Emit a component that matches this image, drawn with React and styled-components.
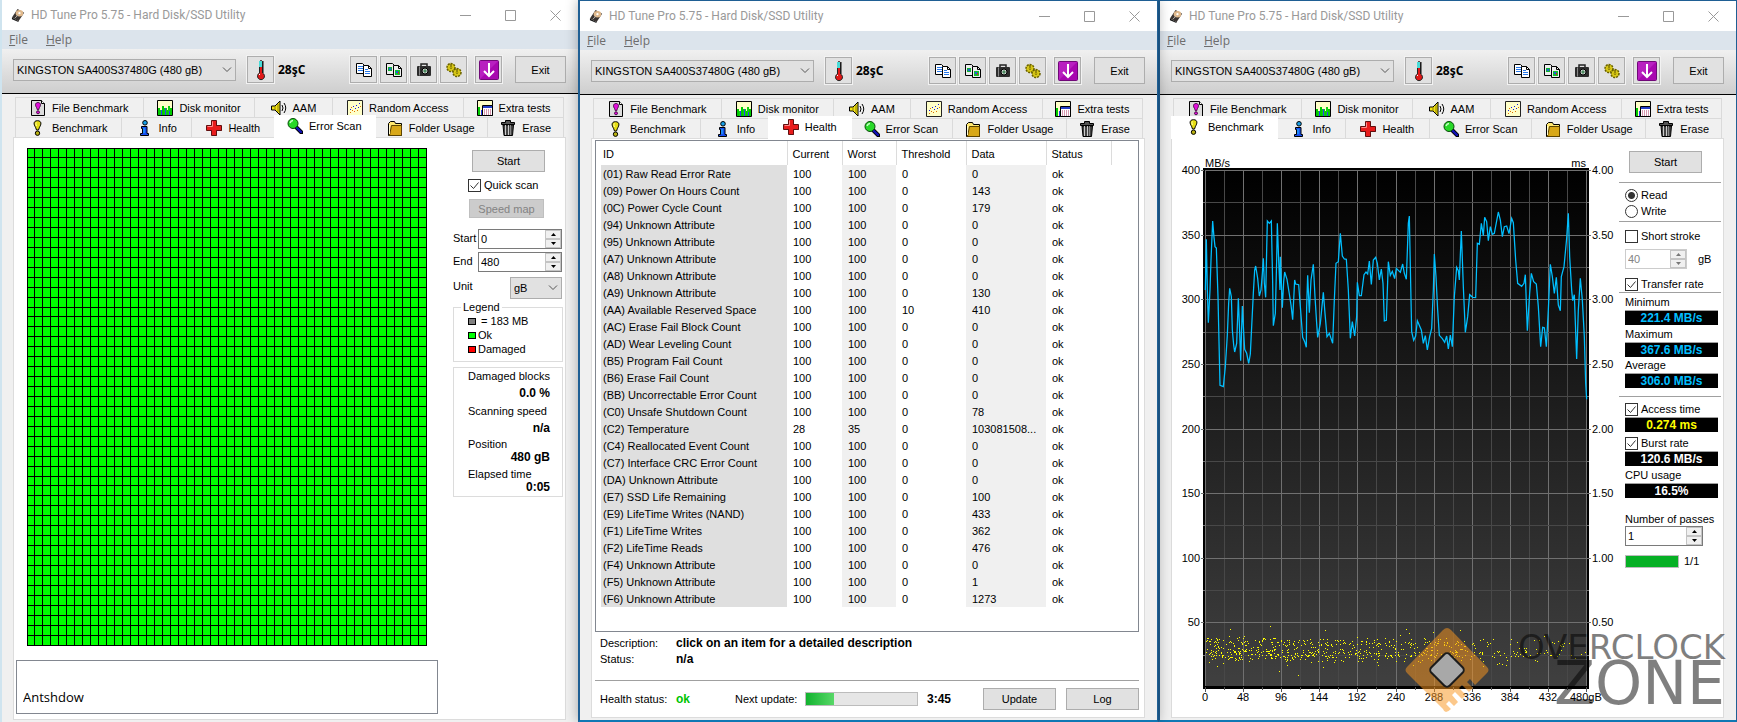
import React from "react";
import styled, { createGlobalStyle, css } from "styled-components";

const GlobalStyle = createGlobalStyle`
  * {
    box-sizing: border-box;
  }

  body {
    margin: 0;
    background: #cfe4ef;
    color: #000;
    font-family: "Liberation Sans", Arial, sans-serif;
    font-size: 11px;
    line-height: 14px;
  }

  button, input, select {
    font: inherit;
    color: inherit;
    border-radius: 0;
    margin: 0;
    padding: 0;
  }

  svg {
    display: block;
    flex: none;
  }
`;

/* ---------- window frame ---------- */

const Desktop = styled.main`
  display: flex;
  min-height: 100vh;
  padding-left: 2px;
`;

const Frame = styled.section`
  display: flex;
  flex-direction: column;
  flex: ${(props) => props.$grow} 1 0;
  min-width: 0;
  background: #f0f0f0;
  ${(props) =>
    props.$framed &&
    css`
      border: solid #1f5f94;
      border-width: 1px 1px 2px 2px;
      border-bottom-color: #0f78b4;
    `}
  ${(props) =>
    props.$raised &&
    css`
      z-index: 1;
      box-shadow: 0 0 12px rgba(0, 0, 0, 0.3);
    `}
`;

const TitleBar = styled.header`
  display: flex;
  align-items: center;
  height: 30px;
  padding: 0 16px 0 9px;
  background: #fff;
`;

const Title = styled.h1`
  flex: 1;
  margin: 0 0 0 5px;
  color: #999;
  font: 12px/18px Roboto, "Noto Sans", sans-serif;
  white-space: nowrap;
`;

const WindowButton = styled.button`
  display: grid;
  place-items: center;
  width: 13px;
  height: 18px;
  margin-left: 32px;
  border: 0;
  background: none;
`;

const MenuBar = styled.nav`
  display: flex;
  gap: 18px;
  height: 19px;
  padding-left: 7px;
  background: #dce4ec;

  a {
    color: #6d6d6d;
    font: 12px/19px "Open Sans", "Noto Sans", sans-serif;
    text-decoration: none;
  }
`;

const Toolbar = styled.div`
  display: flex;
  align-items: center;
  height: 45px;
  padding: 7px 12px 10px 11px;
  border-bottom: 1px solid #000;
  background: linear-gradient(#f0f0f0, #cecece);
`;

const Button = styled.button`
  width: ${(props) => props.$width || 73}px;
  height: ${(props) => props.$height || 22}px;
  margin-left: ${(props) => props.$left || 0}px;
  border: 1px solid #adadad;
  background: #e1e1e1;
  white-space: nowrap;

  &:disabled {
    border-color: #bfbfbf;
    background: #ccc;
    color: #838383;
  }
`;

const IconButton = styled(Button)`
  display: grid;
  place-items: center;
  box-shadow: 0 0 0 1px #f2f2f2;
`;

const Degrees = styled.strong`
  flex: 1;
  margin-left: 4px;
  font: bold 12px/16px "Open Sans", "Noto Sans", sans-serif;
`;

const SelectBox = styled.div`
  position: relative;
  width: ${(props) => props.$width}px;
  height: 22px;

  select {
    width: 100%;
    height: 100%;
    padding: 0 3px;
    border: 1px solid #adadad;
    background: #e1e1e1;
    appearance: none;
  }

  svg {
    position: absolute;
    top: 8px;
    right: 4px;
    pointer-events: none;
  }
`;

/* ---------- tabs ---------- */

const Body = styled.div`
  display: flex;
  flex-direction: column;
  flex: 1;
  padding: 3px 12px 2px 11px;
`;

const TabRow = styled.div`
  display: flex;
  height: 20px;
  margin: 0 2px;
`;

const Tab = styled.button`
  display: flex;
  align-items: center;
  justify-content: center;
  gap: 6px;
  flex: ${(props) => props.$grow} 1 0;
  min-width: 0;
  border: solid #dadada;
  border-width: 1px 1px 0 0;
  background: #f0f0f0;
  white-space: nowrap;

  &:first-child {
    border-left-width: 1px;
  }

  ${(props) =>
    props.$active &&
    css`
      z-index: 1;
      margin: -2px -2px -1px;
      padding-bottom: 3px;
      border-color: #fff;
      background: #fff;
    `}
`;

const Panel = styled.div`
  position: relative;
  display: flex;
  flex: 1;
  border: 1px solid #dcdcdc;
  background: #fff;
`;

/* ---------- shared controls ---------- */

const Rule = styled.hr`
  width: 100%;
  height: 1px;
  margin: ${(props) => props.$top}px 0 0;
  border: 0;
  background: #a0a0a0;
`;

const Check = styled.label`
  display: flex;
  align-items: center;
  gap: 3px;
  height: ${(props) => props.$height || 14}px;
  margin-top: ${(props) => props.$top || 0}px;
  margin-left: ${(props) => props.$left || 0}px;
  white-space: nowrap;

  input {
    width: 13px;
    height: 13px;
    border: 1px solid #333;
    background: #fff center / 11px no-repeat;
    appearance: none;
  }

  input[type="checkbox"]:checked {
    background-image: url("data:image/svg+xml,%3Csvg xmlns='http://www.w3.org/2000/svg' viewBox='0 0 11 11'%3E%3Cpath d='M1.5 5.5l3 3 5-6' fill='none' stroke='%23333'/%3E%3C/svg%3E");
  }

  input[type="radio"] {
    border-radius: 50%;
  }

  input[type="radio"]:checked {
    background: radial-gradient(#333 0 3px, #fff 4px);
  }
`;

const SpinBox = styled.div`
  display: flex;
  width: ${(props) => props.$width}px;
  height: 20px;
  border: 1px solid ${(props) => (props.$disabled ? "#ccc" : "#7a7a7a")};
  background: #fff;

  input {
    flex: 1;
    min-width: 0;
    padding-left: 2px;
    border: 0;
    background: none;
  }

  input:disabled {
    color: #838383;
  }
`;

const Arrows = styled.div`
  display: grid;
  grid-template-rows: 1fr 1fr;
  width: 16px;

  button {
    display: grid;
    place-items: center;
    border: 1px solid #c4c4c4;
    background: #f0f0f0;
  }
`;

const Chevron = () => (
  <svg width="10" height="6" viewBox="0 0 10 6">
    <path d="M1 .5l4 4 4-4" fill="none" stroke="#555" />
  </svg>
);

const Spinner = ({ id, value, width, disabled }) => (
  <SpinBox $width={width} $disabled={disabled}>
    <input id={id} defaultValue={value} disabled={disabled} aria-label={id} />
    <Arrows>
      <button aria-label="Increase" disabled={disabled}>
        <svg width="5" height="3" viewBox="0 0 5 3">
          <path d="M0 3L2.500 0 5 3z" fill={disabled ? "#777" : "#000"} />
        </svg>
      </button>
      <button aria-label="Decrease" disabled={disabled}>
        <svg width="5" height="3" viewBox="0 0 5 3">
          <path d="M0 0l2.500 3L5 0z" fill={disabled ? "#777" : "#000"} />
        </svg>
      </button>
    </Arrows>
  </SpinBox>
);

/* ---------- icons ---------- */

const icons = {
  drive: (
    <>
      <path d="M7 1l7 4-6 9-7-4z" fill="#3a3431" />
      <path d="M1 10l7 4v1l-7-3z" fill="#111" />
      <ellipse cx="9" cy="5.500" rx="4" ry="3.500" fill="#e0b98c" />
      <circle cx="9" cy="5.500" r="1.200" fill="#fff" />
      <path d="M4 11l4-4" stroke="#b9b3ae" />
    </>
  ),
  fileBenchmark: (
    <>
      <path d="M1.500 .5h10l3 3v12h-13z" fill="#dcdcdc" stroke="#000" />
      <path d="M11.500 .5v3h3" fill="#fff" stroke="#000" />
      <path d="M8 2.500c3 0 3 3 1.500 5L8.500 10h-1L6.500 7.500C5 5.500 5 2.500 8 2.500z" fill="#e010d8" stroke="#300030" strokeWidth=".8" />
      <circle cx="8" cy="12.300" r="1.500" fill="#e010d8" stroke="#300030" strokeWidth=".8" />
    </>
  ),
  monitor: (
    <>
      <path d="M.5 .5h15v15H.5z" fill="#ffffc8" stroke="#000" />
      <path d="M1 8h2v7H1zM5 6h2v9H5zM10 10h1v5h-1zM13 8h2v7h-2z" fill="#0c0" />
      <path d="M3 10h2v5H3zM7 8h3v7H7zM11 6h2v9h-2z" fill="#12d012" />
      <path d="M4 10h1v5H4zM8 8h1v7H8zM12 11h1v4h-1z" fill="#2c3cf0" />
    </>
  ),
  speaker: (
    <>
      <path d="M.5 6h3.500l5-5v14l-5-5H.5z" fill="#f0e418" stroke="#000" />
      <path d="M4 6v4M7 4v8" stroke="#907c00" />
      <path d="M11 5q2 3 0 6M13 3q3.500 5 0 10" fill="none" stroke="#000" />
    </>
  ),
  random: (
    <>
      <path d="M.5 .5h15v15H.5z" fill="#ffffc8" stroke="#222" />
      <path d="M3 9h1v1H3zM6 6h1v1H6zM9 5h1v1H9zM8 8h1v1H8zM11 7h1v1h-1zM12 3h1v1h-1z" fill="#1818e0" />
      <path d="M3 12h1v1H3zM5 10h1v1H5zM7 11h1v1H7zM10 10h1v1h-1zM13 6h1v1h-1zM4 7h1v1H4z" fill="#e07000" />
    </>
  ),
  extra: (
    <>
      <path d="M.5 .5h15v15H.5z" fill="#ffffc8" stroke="#000" />
      <path d="M1 7h2v8H1z" fill="#0c0" />
      <path d="M4 10h1v5H4z" fill="#2c3cf0" />
      <path d="M5.500 5.500h10v10h-10z" fill="#fff" stroke="#000" />
      <path d="M6 6h9v2H6z" fill="#2440c8" />
      <path d="M7 10h8M7 12h8M7 14h8" stroke="#b03060" strokeDasharray="1 1" />
    </>
  ),
  benchmark: (
    <>
      <path d="M7.500 .7c4.500 0 3.800 4 2 6.500L8.500 10h-2l-1-2.800C3.700 4.700 3 .7 7.500.7z" fill="#e6de14" stroke="#000" />
      <path d="M6.500 2.500q-1.500 1 0 3.500" fill="none" stroke="#fffcb0" />
      <circle cx="7.500" cy="13.200" r="2.200" fill="#b8b010" stroke="#000" />
    </>
  ),
  info: (
    <>
      <circle cx="8" cy="2.800" r="2.300" fill="#18a0e8" stroke="#000" />
      <path d="M4.500 6.500h5.500v7h1.500v2h-8v-2h2v-5h-1z" fill="#1850f0" stroke="#000" />
      <path d="M7 8v5" stroke="#20c0ff" />
    </>
  ),
  health: (
    <>
      <path d="M6 1.500h5v4.500h4.500v5H11v4.500H6V11H1V6h5z" fill="#400" />
      <path d="M5.500 .5h5v5h5v5h-5v5h-5v-5h-5v-5h5z" fill="#e81c1c" stroke="#601010" />
      <path d="M6.500 1.500v5h-5" fill="none" stroke="#ff8c8c" />
    </>
  ),
  scan: (
    <>
      <path d="M9 9l5.500 5.500" stroke="#000" strokeWidth="4" strokeLinecap="round" />
      <path d="M9.500 9.500l4.500 4.500" stroke="#1010b8" strokeWidth="2.400" strokeLinecap="round" />
      <circle cx="6" cy="5.500" r="5" fill="#28d828" stroke="#064806" />
      <path d="M3 5q1-2.500 3-2.500" fill="none" stroke="#c8ffc8" strokeWidth="1.500" />
    </>
  ),
  folder: (
    <>
      <path d="M1.500 3.500l2-2h4l1 2h6v12h-13z" fill="#ffe870" stroke="#000" />
      <path d="M4.500 5.500h10v10h-12z" fill="#d8a818" stroke="#5c4400" />
      <path d="M2.500 5v9" stroke="#fffad0" />
    </>
  ),
  trash: (
    <>
      <path d="M5.500 .5h5v2h4v2h-13v-2h4z" fill="#555" stroke="#000" />
      <path d="M3 5h10.500l-1 10.500H4z" fill="#444" stroke="#000" />
      <path d="M5.500 5v10M8.500 5v10" stroke="#ccc" />
      <path d="M10.500 5v10" stroke="#888" />
    </>
  ),
  copy: (
    <>
      <path d="M.5 1.500h6l2 2v8h-8z" fill="#fff" stroke="#000" />
      <path d="M2 4.500h5M2 6.500h5M2 8.500h5" stroke="#2878e8" />
      <path d="M7.500 3.500h5l3 3v8h-8z" fill="#fff" stroke="#000" />
      <path d="M12.500 3.500v3h3" fill="none" stroke="#000" />
      <path d="M9 7.500h3M9 9.500h5M9 11.500h5" stroke="#2878e8" />
    </>
  ),
  copyImage: (
    <>
      <path d="M.5 1.500h6l2 2v9h-8z" fill="#eee" stroke="#000" />
      <path d="M2 5h4v4H2z" fill="#10b030" />
      <path d="M7.500 3.500h5l3 3v8h-8z" fill="#eee" stroke="#000" />
      <path d="M12.500 3.500v3h3" fill="none" stroke="#000" />
      <path d="M9 8h5v5H9z" fill="#10c030" />
      <path d="M3 6h2v2H3zM10 9h2v2h-2z" fill="#2060d8" />
      <path d="M12 10h1v2h-1z" fill="#e02020" />
    </>
  ),
  camera: (
    <>
      <path d="M5 4V2h6v2" fill="none" stroke="#222" strokeWidth="1.500" />
      <rect x="1" y="4" width="14" height="10" rx="1" fill="#2c2c2c" />
      <path d="M3.500 4.500v9" stroke="#888" />
      <circle cx="9" cy="9" r="3" fill="#ddd" stroke="#000" />
      <circle cx="9" cy="9" r="1.700" fill="#4c8c60" />
    </>
  ),
  gears: (
    <>
      <circle cx="5" cy="5.500" r="4" fill="#d8c818" stroke="#686000" strokeWidth="1.500" strokeDasharray="2 1" />
      <circle cx="11" cy="10.500" r="4" fill="#d8c818" stroke="#686000" strokeWidth="1.500" strokeDasharray="2 1" />
      <path d="M5 2v5M11 7v5" stroke="#504800" />
      <path d="M3.500 5.500h3M9.500 10.500h3" stroke="#b8a800" />
    </>
  ),
};

const Icon = ({ name, size = 16 }) => (
  <svg width={size} height={size} viewBox="0 0 16 16">
    {icons[name]}
  </svg>
);

const Thermometer = () => (
  <svg width="12" height="22" viewBox="0 0 12 22">
    <path d="M4.500 2.500q1.500-2 3 0V14a3.500 3.500 0 1 1-3 0z" fill="#e01818" stroke="#222" />
    <path d="M4 2h3v6H4z" fill="#48dcd8" />
    <path d="M8 2v12" stroke="#111" />
    <path d="M4 16l1-1" stroke="#fff" />
  </svg>
);

const SaveArrow = () => (
  <svg width="20" height="20" viewBox="0 0 20 20">
    <rect x=".5" y=".5" width="19" height="19" rx="1" fill="#a808b0" stroke="#700878" />
    <path d="M1 1h18L1 19z" fill="#c838d0" opacity=".5" />
    <path d="M10 3v12M5 11l5 5 5-5" fill="none" stroke="#fff" strokeWidth="2" />
  </svg>
);

/* ---------- window ---------- */

const topTabs = [
  { name: "File Benchmark", icon: "fileBenchmark", grow: 128 },
  { name: "Disk monitor", icon: "monitor", grow: 112 },
  { name: "AAM", icon: "speaker", grow: 77 },
  { name: "Random Access", icon: "random", grow: 132 },
  { name: "Extra tests", icon: "extra", grow: 100 },
];

const bottomTabs = [
  { name: "Benchmark", icon: "benchmark", grow: 106 },
  { name: "Info", icon: "info", grow: 69 },
  { name: "Health", icon: "health", grow: 83 },
  { name: "Error Scan", icon: "scan", grow: 102 },
  { name: "Folder Usage", icon: "folder", grow: 114 },
  { name: "Erase", icon: "trash", grow: 75 },
];

const tools = ["copy", "copyImage", "camera", "gears"];

const Window = ({ active, grow, framed, raised, children }) => (
  <Frame $grow={grow} $framed={framed} $raised={raised}>
    <TitleBar>
      <Icon name="drive" size={15} />
      <Title>HD Tune Pro 5.75 - Hard Disk/SSD Utility</Title>
      <WindowButton aria-label="Minimize">
        <svg width="11" height="11" viewBox="0 0 11 11">
          <path d="M0 5.500h11" stroke="#999" />
        </svg>
      </WindowButton>
      <WindowButton aria-label="Maximize">
        <svg width="11" height="11" viewBox="0 0 11 11">
          <path d="M.5 .5h10v10H.5z" fill="none" stroke="#999" />
        </svg>
      </WindowButton>
      <WindowButton aria-label="Close">
        <svg width="11" height="11" viewBox="0 0 11 11">
          <path d="M.5 .5l10 10M10.500 .5l-10 10" stroke="#999" />
        </svg>
      </WindowButton>
    </TitleBar>
    <MenuBar>
      <a href="#file">
        <u>F</u>ile
      </a>
      <a href="#help">
        <u>H</u>elp
      </a>
    </MenuBar>
    <Toolbar>
      <SelectBox $width={223}>
        <select aria-label="Drive">
          <option>KINGSTON SA400S37480G (480 gB)</option>
        </select>
        <Chevron />
      </SelectBox>
      <IconButton $width={27} $height={27} $left={11} aria-label="Temperature">
        <Thermometer />
      </IconButton>
      <Degrees>28şC</Degrees>
      {tools.map((tool) => (
        <IconButton $width={27} $height={27} $left={3} key={tool} aria-label={tool}>
          <Icon name={tool} />
        </IconButton>
      ))}
      <IconButton $width={27} $height={27} $left={8} aria-label="Save">
        <SaveArrow />
      </IconButton>
      <Button $width={51} $height={27} $left={13}>
        Exit
      </Button>
    </Toolbar>
    <Body>
      {[topTabs, bottomTabs].map((row, index) => (
        <TabRow key={index}>
          {row.map((tab) => (
            <Tab key={tab.name} $grow={tab.grow} $active={tab.name === active}>
              <Icon name={tab.icon} />
              {tab.name}
            </Tab>
          ))}
        </TabRow>
      ))}
      <Panel>{children}</Panel>
    </Body>
  </Frame>
);

/* ---------- error scan ---------- */

const ScanLayout = styled.div`
  display: flex;
  justify-content: space-between;
  flex: 1;
  padding: 10px 2px 5px;
`;

const ScanMain = styled.div`
  display: flex;
  flex-direction: column;
  gap: 14px;
  width: 422px;

  svg {
    margin-left: 11px;
  }
`;

const Note = styled.input`
  height: 54px;
  padding: 20px 6px 0;
  border: 1px solid #828790;
  font: 13px/18px "Open Sans", "Noto Sans", sans-serif;
`;

const ScanSide = styled.div`
  display: flex;
  flex-direction: column;
  width: 110px;
  padding-top: 2px;
`;

const Field = styled.div`
  display: flex;
  justify-content: space-between;
  align-items: flex-start;
  margin-top: ${(props) => props.$top}px;
  padding-right: 1px;

  label {
    padding-top: 2px;
  }
`;

const SpeedMap = styled(Button)`
  margin-top: 7px;
`;

const Legend = styled.fieldset`
  height: 62px;
  margin: 1px 0 0;
  padding: 0 0 0 14px;
  border: 1px solid #dcdcdc;

  legend {
    margin-left: -7px;
    padding: 0 2px;
  }
`;

const LegendItem = styled.div`
  display: flex;
  align-items: center;
  gap: 2px;

  i {
    width: 8px;
    height: 7px;
    border: 1px solid #000;
    background: ${(props) => props.$color};
  }
`;

const Stats = styled.dl`
  height: 130px;
  margin: 5px 0 0;
  padding: 0 12px 0 14px;
  border: 1px solid #dcdcdc;
  white-space: nowrap;
`;

const Stat = styled.div`
  margin-bottom: ${(props) => (props.$tight ? 4 : 1)}px;
  line-height: ${(props) => (props.$tight ? 13 : 17)}px;

  dd {
    margin: 0;
    font-size: 12px;
    font-weight: bold;
    text-align: right;
  }
`;

const steps = Array.from({ length: 51 }, (_, i) => i);

const BlockMap = () => (
  <svg width="400" height="498" viewBox="0 0 400 498">
    <path d="M0 0h400v498H0z" fill="#0f0" />
    <g stroke="#000">
      {steps.map((i) => (
        <path key={`c${i}`} d={`M${Math.floor(i * 7.98) + 0.5} 0v498`} />
      ))}
      {steps.map((i) => (
        <path key={`r${i}`} d={`M0 ${Math.floor(i * 9.94) + 0.5}h400`} />
      ))}
    </g>
  </svg>
);

const ErrorScan = () => (
  <ScanLayout>
    <ScanMain>
      <BlockMap />
      <Note defaultValue="Antshdow" aria-label="Note" />
    </ScanMain>
    <ScanSide>
      <Button $left={19}>Start</Button>
      <Check $top={6} $left={15}>
        <input type="checkbox" defaultChecked />
        Quick scan
      </Check>
      <SpeedMap disabled $width={75} $height={19} $left={16}>
        Speed map
      </SpeedMap>
      <Field $top={11}>
        <label htmlFor="scan-start">Start</label>
        <Spinner id="scan-start" value="0" width={84} />
      </Field>
      <Field $top={3}>
        <label htmlFor="scan-end">End</label>
        <Spinner id="scan-end" value="480" width={84} />
      </Field>
      <Field $top={5}>
        <label htmlFor="scan-unit">Unit</label>
        <SelectBox $width={52}>
          <select id="scan-unit">
            <option>gB</option>
          </select>
          <Chevron />
        </SelectBox>
      </Field>
      <Legend>
        <legend>Legend</legend>
        <LegendItem $color="#808080">
          <i />
          {"\u00a0= 183 MB"}
        </LegendItem>
        <LegendItem $color="#0f0">
          <i />
          Ok
        </LegendItem>
        <LegendItem $color="#f00">
          <i />
          Damaged
        </LegendItem>
      </Legend>
      <Stats>
        <Stat>
          <dt>Damaged blocks</dt>
          <dd>0.0 %</dd>
        </Stat>
        <Stat>
          <dt>Scanning speed</dt>
          <dd>n/a</dd>
        </Stat>
        <Stat $tight>
          <dt>Position</dt>
          <dd>480 gB</dd>
        </Stat>
        <Stat $tight>
          <dt>Elapsed time</dt>
          <dd>0:05</dd>
        </Stat>
      </Stats>
    </ScanSide>
  </ScanLayout>
);

/* ---------- health ---------- */

const attributes = [
  ["(01) Raw Read Error Rate", 100, 100, 0, "0"],
  ["(09) Power On Hours Count", 100, 100, 0, "143"],
  ["(0C) Power Cycle Count", 100, 100, 0, "179"],
  ["(94) Unknown Attribute", 100, 100, 0, "0"],
  ["(95) Unknown Attribute", 100, 100, 0, "0"],
  ["(A7) Unknown Attribute", 100, 100, 0, "0"],
  ["(A8) Unknown Attribute", 100, 100, 0, "0"],
  ["(A9) Unknown Attribute", 100, 100, 0, "130"],
  ["(AA) Available Reserved Space", 100, 100, 10, "410"],
  ["(AC) Erase Fail Block Count", 100, 100, 0, "0"],
  ["(AD) Wear Leveling Count", 100, 100, 0, "0"],
  ["(B5) Program Fail Count", 100, 100, 0, "0"],
  ["(B6) Erase Fail Count", 100, 100, 0, "0"],
  ["(BB) Uncorrectable Error Count", 100, 100, 0, "0"],
  ["(C0) Unsafe Shutdown Count", 100, 100, 0, "78"],
  ["(C2) Temperature", 28, 35, 0, "103081508..."],
  ["(C4) Reallocated Event Count", 100, 100, 0, "0"],
  ["(C7) Interface CRC Error Count", 100, 100, 0, "0"],
  ["(DA) Unknown Attribute", 100, 100, 0, "0"],
  ["(E7) SSD Life Remaining", 100, 100, 0, "100"],
  ["(E9) LifeTime Writes (NAND)", 100, 100, 0, "433"],
  ["(F1) LifeTime Writes", 100, 100, 0, "362"],
  ["(F2) LifeTime Reads", 100, 100, 0, "476"],
  ["(F4) Unknown Attribute", 100, 100, 0, "0"],
  ["(F5) Unknown Attribute", 100, 100, 0, "1"],
  ["(F6) Unknown Attribute", 100, 100, 0, "1273"],
];

const columns = [
  { name: "ID", width: 186 },
  { name: "Current", width: 55 },
  { name: "Worst", width: 54 },
  { name: "Threshold", width: 70 },
  { name: "Data", width: 80 },
  { name: "Status", width: 65 },
];

const HealthLayout = styled.div`
  display: flex;
  flex-direction: column;
  flex: 1;
  padding: 1px 5px 7px 3px;
`;

const ListView = styled.div`
  flex: 1;
  padding-left: 5px;
  border: 1px solid #828790;
`;

const AttributeTable = styled.table`
  width: 510px;
  border-collapse: collapse;
  table-layout: fixed;
  white-space: nowrap;

  th {
    height: 24px;
    padding: 2px 0 0 5px;
    border-right: 1px solid #dcdcdc;
    font-weight: normal;
    text-align: left;
  }

  td {
    height: 17px;
    padding: 0 0 0 6px;
  }

  th:first-child,
  td:first-child {
    padding-left: 2px;
  }

  td:first-child {
    background: #dfdfdf;
  }

  td:nth-child(3),
  td:nth-child(5) {
    background: #f0f0f0;
  }
`;

const Details = styled.dl`
  display: grid;
  grid-template-columns: 76px 1fr;
  margin: 3px 0 0 5px;
  line-height: 16px;

  dd {
    margin: 0;
    font-size: 12px;
    font-weight: bold;
  }
`;

const HealthFooter = styled.div`
  display: flex;
  align-items: center;
  margin-top: 7px;
  padding-left: 5px;
`;

const Caption = styled.span`
  width: ${(props) => props.$width}px;
  white-space: nowrap;
`;

const HealthOk = styled.strong`
  width: 59px;
  color: #00c400;
  font-size: 12px;
`;

const Countdown = styled.strong`
  flex: 1;
  margin-left: 9px;
  font-size: 12px;
`;

const Meter = styled.div`
  width: ${(props) => props.$width}px;
  height: ${(props) => props.$height}px;
  border: 1px solid #bcbcbc;
  background: #e6e6e6;

  div {
    height: 100%;
    background: ${(props) =>
      props.$plain ? "#06b025" : "linear-gradient(90deg, #12b32f, #58d868)"};
  }
`;

const Health = () => (
  <HealthLayout>
    <ListView>
      <AttributeTable>
        <colgroup>
          {columns.map((column) => (
            <col key={column.name} style={{ width: column.width }} />
          ))}
        </colgroup>
        <thead>
          <tr>
            {columns.map((column) => (
              <th key={column.name}>{column.name}</th>
            ))}
          </tr>
        </thead>
        <tbody>
          {attributes.map((row) => (
            <tr key={row[0]}>
              {row.map((value, index) => (
                <td key={index}>{value}</td>
              ))}
              <td>ok</td>
            </tr>
          ))}
        </tbody>
      </AttributeTable>
    </ListView>
    <Details>
      <dt>Description:</dt>
      <dd>click on an item for a detailed description</dd>
      <dt>Status:</dt>
      <dd>n/a</dd>
    </Details>
    <Rule $top={13} />
    <HealthFooter>
      <Caption $width={76}>Health status:</Caption>
      <HealthOk>ok</HealthOk>
      <Caption $width={70}>Next update:</Caption>
      <Meter $width={113} $height={14}>
        <div style={{ width: "25%" }} />
      </Meter>
      <Countdown>3:45</Countdown>
      <Button>Update</Button>
      <Button $left={10}>Log</Button>
    </HealthFooter>
  </HealthLayout>
);

/* ---------- benchmark ---------- */

// transfer rate curve, in thirds of a pixel
const transfer =
  "46,420 49,268 52,420 55,518 60,420 63,330 68,213 72,262 75,290 79,294 84,440 87,575 89,660 90,706 100,710 106,650 112,555 116,460 119,415 124,440 127,540 131,585 134,606 140,580 145,445 149,545 152,632 157,468 161,545 164,598 170,610 176,640 181,612 185,530 190,430 194,360 197,348 203,385 208,438 213,420 217,370 220,325 223,400 227,442 230,300 232,213 238,220 244,213 248,400 250,527 256,490 260,330 262,220 266,330 270,420 271,320 277,473 281,395 284,366 291,388 298,432 303,465 308,509 314,390 317,402 326,404 331,470 338,562 344,575 349,592 350,470 353,376 358,488 363,390 370,343 375,440 380,520 383,562 391,520 400,427 405,490 411,560 418,550 428,580 433,450 438,340 445,335 451,250 457,318 463,327 469,328 475,420 481,565 487,515 494,558 500,500 502,397 508,437 514,437 522,374 528,366 533,372 538,333 544,403 550,330 557,322 562,340 568,390 574,357 579,400 583,513 589,511 595,335 601,376 607,364 614,386 619,355 631,367 638,342 643,370 649,388 655,220 658,198 662,400 665,545 671,571 677,558 682,512 694,540 700,580 706,557 712,600 719,560 725,535 730,420 733,312 738,380 743,480 748,556 757,566 764,577 770,558 775,597 781,555 787,590 793,440 800,352 805,362 808,390 814,243 820,410 826,547 833,500 839,434 848,442 857,443 862,280 868,283 874,220 880,257 884,202 890,215 895,272 901,230 907,253 913,250 925,186 931,210 937,260 943,230 950,228 957,251 965,205 970,218 977,330 983,400 995,409 1002,400 1006,374 1012,542 1019,430 1024,370 1031,395 1039,402 1045,470 1052,590 1058,532 1063,533 1069,590 1075,480 1081,343 1087,380 1093,430 1099,382 1105,465 1111,482 1114,380 1122,350 1130,265 1135,190 1139,320 1145,420 1148,452 1153,434 1160,627 1165,480 1171,385 1177,450 1183,560 1187,700 1190,748";

// access time samples: two loose bands that thin out to the right
const accessDots = (() => {
  let seed = 20;
  const next = () => {
    seed = (seed * 16807) % 2147483647;
    return seed / 2147483647;
  };
  const dots = [
    [55, 479],
    [95, 476],
    [150, 480],
    [231, 479],
    [285, 480],
    [123, 525],
  ];
  while (dots.length < 680) {
    const x = Math.floor(next() * 380);
    if (next() > 1.15 - x / 360) continue;
    const kind = next();
    const spread = next() + next() + next() - 1.5;
    let y = 501 + spread * 15;
    if (kind < 0.25) y = 492 + spread * 5;
    else if (kind < 0.6) y = 504 + spread * 6;
    dots.push([x + 31, Math.round(y)]);
  }
  return dots;
})();

const LEFT = 30;
const TOP = 20;
const WIDTH = 382;
const HEIGHT = 517;

const Chart = () => (
  <svg width="440" height="560" viewBox="0 0 440 560" fontSize="11">
    <defs>
      <linearGradient id="plot" x1="0" y1="0" x2="0" y2="1">
        <stop offset="0" stopColor="#000" />
        <stop offset="1" stopColor="#404040" />
      </linearGradient>
    </defs>
    <rect x={LEFT - 2} y={TOP - 2} width={WIDTH + 4} height={HEIGHT + 4} />
    <rect x={LEFT} y={TOP} width={WIDTH} height={HEIGHT - 1} fill="url(#plot)" />
    <g shapeRendering="crispEdges">
      {Array.from({ length: 21 }, (_, i) => {
        const x = LEFT + Math.round((i * (WIDTH - 1)) / 20) + 0.5;
        return (
          <React.Fragment key={i}>
            <path d={`M${x} ${TOP}v${HEIGHT - 1}`} stroke={i % 2 ? "#484848" : "#707070"} />
            <path d={`M${x} ${TOP + HEIGHT}v${i % 2 ? 3 : 5}`} stroke="#555" />
          </React.Fragment>
        );
      })}
      {Array.from({ length: 16 }, (_, i) => {
        const y = TOP + Math.round((i * HEIGHT) / 16) + 0.5;
        return (
          <React.Fragment key={i}>
            <path d={`M${LEFT} ${y}h${WIDTH}`} stroke={i % 2 ? "#484848" : "#707070"} />
            <path
              d={`M${LEFT - (i % 2 ? 2 : 4)} ${y}h3M${LEFT + WIDTH - 1} ${y}h${i % 2 ? 3 : 5}`}
              stroke="#707070"
            />
          </React.Fragment>
        );
      })}
      <g fill="#ff0">
        {accessDots.map(([x, y], i) => (
          <rect key={i} x={x} y={y} width="1" height="1" />
        ))}
      </g>
    </g>
    <polyline
      points={transfer}
      transform="translate(15 0) scale(.33333)"
      fill="none"
      stroke="#00bfff"
      strokeWidth="3.800"
    />
    <text x={LEFT} y="17">
      MB/s
    </text>
    <text x={LEFT + WIDTH - 1} y="17" textAnchor="end">
      ms
    </text>
    {[400, 350, 300, 250, 200, 150, 100, 50].map((rate, i) => (
      <React.Fragment key={rate}>
        <text x="25" y={24 + Math.round((i * HEIGHT) / 8)} textAnchor="end">
          {rate}
        </text>
        <text x="417" y={24 + Math.round((i * HEIGHT) / 8)}>
          {(rate / 100).toFixed(2)}
        </text>
      </React.Fragment>
    ))}
    {[0, 48, 96, 144, 192, 240, 288, 336, 384, 432].map((size, i) => (
      <text key={size} x={LEFT + Math.round(i * 38.1)} y="551" textAnchor="middle">
        {size}
      </text>
    ))}
    <text x="395" y="551">
      480gB
    </text>
  </svg>
);

const BenchLayout = styled.div`
  display: flex;
  justify-content: space-between;
  flex: 1;
  padding: 11px 2px 0 3px;
`;

const BenchSide = styled.div`
  display: flex;
  flex-direction: column;
  width: 102px;
  padding-top: 1px;
`;

const Line = styled.label`
  display: block;
  height: 14px;
  margin: ${(props) => props.$top}px 0 0 6px;
  white-space: nowrap;
`;

const Readout = styled.output`
  display: block;
  height: 15px;
  margin: 1px 3px 0 6px;
  border-top: 1px solid #a0a0a0;
  background: #000;
  color: ${(props) => props.$color || "#fff"};
  font-size: 12px;
  font-weight: bold;
  line-height: 14px;
  text-align: center;
`;

const Inline = styled.div`
  display: flex;
  align-items: center;
  gap: ${(props) => props.$gap}px;
  margin: ${(props) => props.$top}px 0 0 6px;
`;

const Watermark = styled.div`
  position: absolute;
  right: -2px;
  bottom: 4px;
  display: flex;
  align-items: center;
  justify-content: space-between;
  width: 320px;
  pointer-events: none;
`;

const Brand = styled.div`
  color: rgba(0, 0, 0, 0.5);
  font-family: "DejaVu Sans", sans-serif;
  font-size: ${(props) => props.$size}px;
  line-height: ${(props) => props.$line}px;
  text-align: right;
`;

const Benchmark = () => (
  <BenchLayout>
    <Chart />
    <BenchSide>
      <Button $left={10}>Start</Button>
      <Rule $top={9} />
      <Check $top={4} $left={6} $height={16}>
        <input type="radio" name="mode" defaultChecked />
        Read
      </Check>
      <Check $left={6} $height={16}>
        <input type="radio" name="mode" />
        Write
      </Check>
      <Rule $top={2} />
      <Check $top={7} $left={6}>
        <input type="checkbox" />
        Short stroke
      </Check>
      <Inline $top={6} $gap={11}>
        <Spinner id="stroke" value="40" width={62} disabled />
        gB
      </Inline>
      <Check $top={8} $left={6}>
        <input type="checkbox" defaultChecked />
        Transfer rate
      </Check>
      <Rule $top={1} />
      <Line $top={2}>Minimum</Line>
      <Readout $color="#00bfff">221.4 MB/s</Readout>
      <Line $top={2}>Maximum</Line>
      <Readout $color="#00bfff">367.6 MB/s</Readout>
      <Line $top={1}>Average</Line>
      <Readout $color="#00bfff">306.0 MB/s</Readout>
      <Rule $top={8} />
      <Check $top={5} $left={6}>
        <input type="checkbox" defaultChecked />
        Access time
      </Check>
      <Readout $color="#ff0">0.274 ms</Readout>
      <Check $top={4} $left={6}>
        <input type="checkbox" defaultChecked />
        Burst rate
      </Check>
      <Readout>120.6 MB/s</Readout>
      <Line $top={2}>CPU usage</Line>
      <Readout>16.5%</Readout>
      <Line $top={14} htmlFor="passes">
        Number of passes
      </Line>
      <Inline $top={0} $gap={0}>
        <Spinner id="passes" value="1" width={78} />
      </Inline>
      <Inline $top={8} $gap={5}>
        <Meter $width={54} $height={13} $plain>
          <div />
        </Meter>
        1/1
      </Inline>
    </BenchSide>
    <Watermark>
      <svg width="84" height="86" viewBox="0 0 84 86">
        <path
          d="M38 3q4-4 8 0l36 37q3 3 0 6L70 58l-5-6-3 3 6 6-4 4-7-7-3 3 7 7-4 4-7-7-3 3 6 7-4 4-5-5-3 3 5 5q-6 6-8 0L2 46q-3-3 0-6z"
          fill="#fa961e"
          opacity=".52"
        />
        <rect x="29" y="30" width="26" height="26" rx="4" transform="rotate(45 42 43)" fill="#a8a8a8" stroke="#1c1c1c" strokeWidth="2" />
      </svg>
      <div>
        <Brand $size={34} $line={26}>
          OVERCLOCK
        </Brand>
        <Brand $size={60} $line={46}>
          ZONE
        </Brand>
      </div>
    </Watermark>
  </BenchLayout>
);

const App = () => {
  return (
    <>
      <GlobalStyle />
      <Desktop>
        <Window active="Error Scan" grow={576}>
          <ErrorScan />
        </Window>
        <Window active="Health" grow={577} framed raised>
          <Health />
        </Window>
        <Window active="Benchmark" grow={576} framed>
          <Benchmark />
        </Window>
      </Desktop>
    </>
  );
};

export default App;
